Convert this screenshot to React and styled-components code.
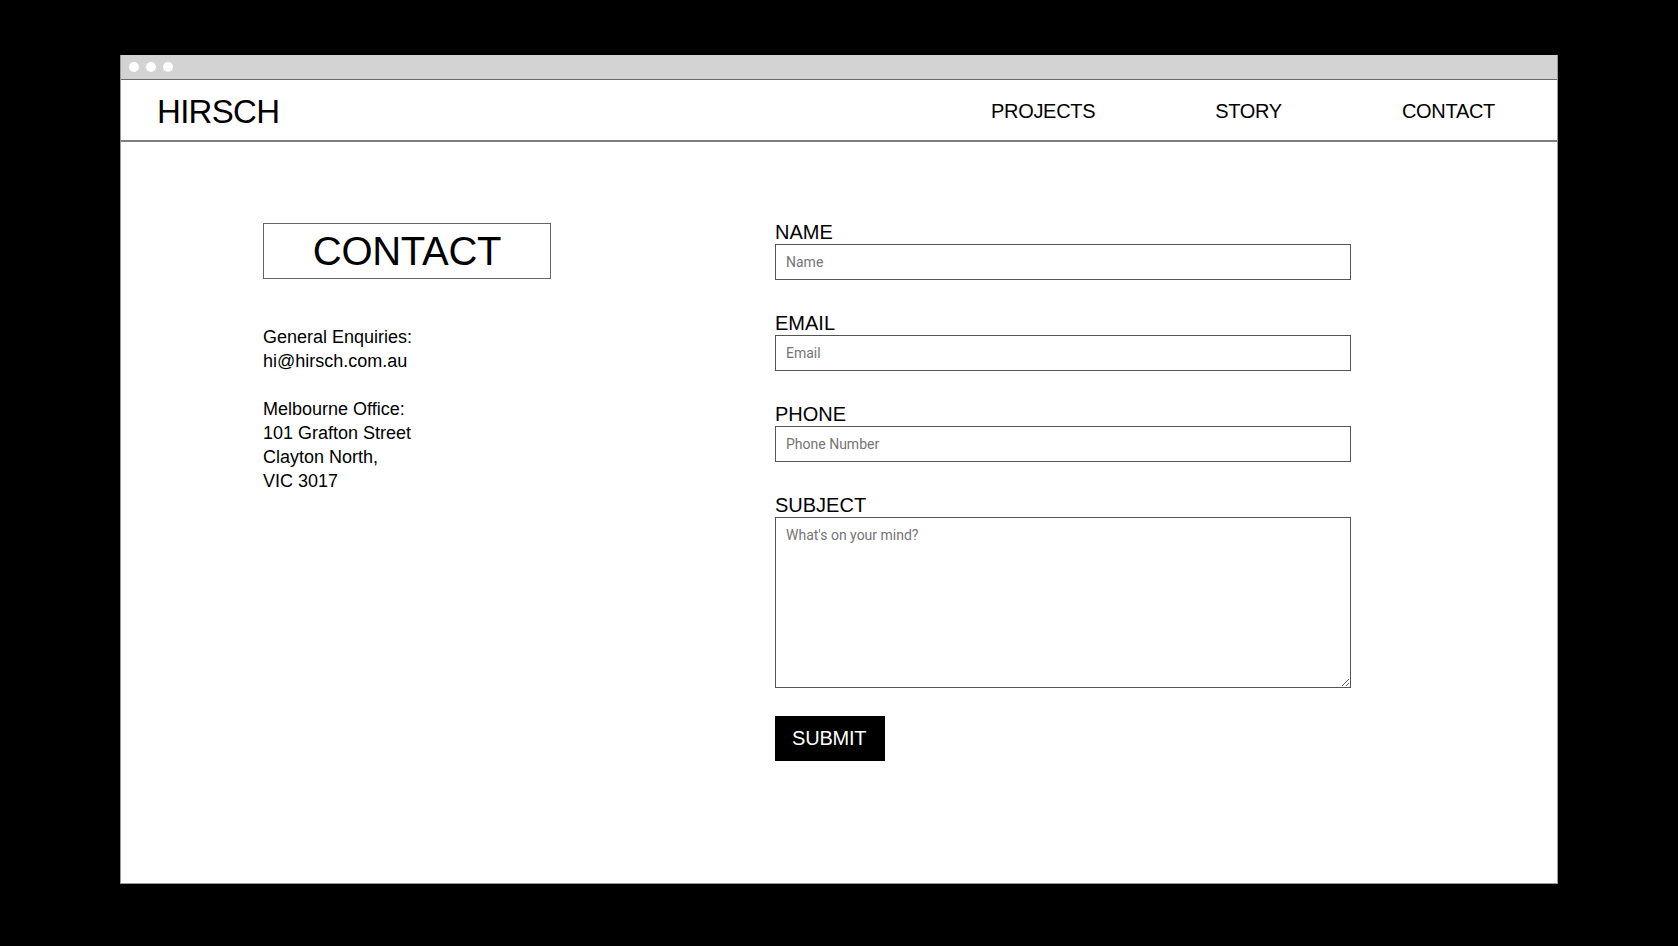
import React from "react";
import styled, { createGlobalStyle } from "styled-components";

const GlobalStyle = createGlobalStyle`
  html, body {
    margin: 0;
    padding: 0;
    background: #000;
  }
  body {
    padding-top: 55px;
    font-family: "Liberation Sans", Arial, sans-serif;
    color: #000;
  }
  * {
    box-sizing: border-box;
  }
`;

const BrowserWindow = styled.div`
  width: 1438px;
  height: 829px;
  margin: 0 auto;
  background: #fff;
  border: 1px solid #9a9a9a;
  border-top: none;
  display: flex;
  flex-direction: column;
`;

const TitleBar = styled.div`
  height: 25px;
  background: #d3d3d3;
  border-bottom: 1px solid #6a6a6a;
  display: flex;
  align-items: center;
  gap: 7px;
  padding-left: 8px;
`;

const Dot = styled.span`
  width: 10px;
  height: 10px;
  border-radius: 50%;
  background: #fff;
`;

const NavBar = styled.header`
  height: 62px;
  border-bottom: 2px solid #7f7f7f;
  display: flex;
  align-items: center;
  justify-content: space-between;
  padding: 3px 62px 0 36px;
`;

const Logo = styled.div`
  font-size: 33px;
  letter-spacing: -0.7px;
  line-height: 1;
`;

const NavList = styled.nav`
  display: flex;
  gap: 120px;
`;

const NavLink = styled.a`
  font-size: 20px;
  letter-spacing: -0.3px;
  color: #000;
  text-decoration: none;
`;

const Main = styled.main`
  flex: 1;
  display: grid;
  grid-template-columns: 512px 576px;
  align-items: start;
  padding: 81px 0 0 142px;
`;

const InfoColumn = styled.section`
  display: flex;
  flex-direction: column;
`;

const TitleBox = styled.h1`
  margin: 0;
  width: 288px;
  height: 56px;
  border: 1px solid #666;
  display: flex;
  align-items: center;
  justify-content: center;
  font-size: 40px;
  font-weight: 400;
  letter-spacing: -0.3px;
`;

const InfoText = styled.p`
  margin: 46px 0 0;
  font-size: 18px;
  line-height: 24px;
`;

const Form = styled.form`
  display: flex;
  flex-direction: column;
  margin-top: -2px;
`;

const Field = styled.div`
  display: flex;
  flex-direction: column;
  margin-bottom: ${(p) => (p.$last ? "28px" : "32px")};
`;

const Label = styled.label`
  font-size: 20px;
  line-height: 23px;
`;

const inputStyles = `
  width: 576px;
  border: 1px solid #555;
  border-radius: 0;
  padding: 0 10px;
  font-family: Roboto, "Liberation Sans", Arial, sans-serif;
  font-size: 14px;
  color: #000;
  outline: none;
  &::placeholder {
    color: #757575;
  }
`;

const TextInput = styled.input`
  ${inputStyles}
  height: 36px;
`;

const TextArea = styled.textarea`
  ${inputStyles}
  height: 171px;
  padding-top: 9px;
  resize: both;
`;

const SubmitButton = styled.button`
  align-self: flex-start;
  height: 45px;
  padding: 0 19px 0 17px;
  border: none;
  background: #000;
  color: #fff;
  font-family: "Liberation Sans", Arial, sans-serif;
  font-size: 20px;
  letter-spacing: -0.2px;
  cursor: pointer;
`;

const FIELDS = [
  { id: "name", label: "NAME", placeholder: "Name", type: "text" },
  { id: "email", label: "EMAIL", placeholder: "Email", type: "email" },
  { id: "phone", label: "PHONE", placeholder: "Phone Number", type: "tel" },
];

function App() {
  return (
    <>
      <GlobalStyle />
      <BrowserWindow>
        <TitleBar>
          <Dot />
          <Dot />
          <Dot />
        </TitleBar>

        <NavBar>
          <Logo>HIRSCH</Logo>
          <NavList>
            <NavLink href="#">PROJECTS</NavLink>
            <NavLink href="#">STORY</NavLink>
            <NavLink href="#">CONTACT</NavLink>
          </NavList>
        </NavBar>

        <Main>
          <InfoColumn>
            <TitleBox>CONTACT</TitleBox>
            <InfoText>
              General Enquiries:
              <br />
              hi@hirsch.com.au
              <br />
              <br />
              Melbourne Office:
              <br />
              101 Grafton Street
              <br />
              Clayton North,
              <br />
              VIC 3017
            </InfoText>
          </InfoColumn>

          <Form onSubmit={(e) => e.preventDefault()}>
            {FIELDS.map((f) => (
              <Field key={f.id}>
                <Label htmlFor={f.id}>{f.label}</Label>
                <TextInput id={f.id} type={f.type} placeholder={f.placeholder} />
              </Field>
            ))}
            <Field $last>
              <Label htmlFor="subject">SUBJECT</Label>
              <TextArea id="subject" placeholder="What's on your mind?" />
            </Field>
            <SubmitButton type="submit">SUBMIT</SubmitButton>
          </Form>
        </Main>
      </BrowserWindow>
    </>
  );
}

export default App;
